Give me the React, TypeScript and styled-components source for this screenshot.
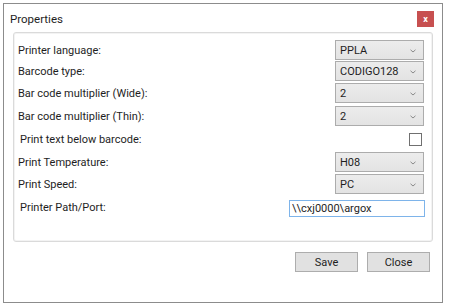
import React from "react"
import styled, { createGlobalStyle } from "styled-components"

const Global = createGlobalStyle`
    html, body {
        margin: 0;
        padding: 0;
        background: #ffffff;
    }
    body {
        font-family: Roboto, Lato, sans-serif;
        font-size: 11px;
        color: #1e1e1e;
    }
`

const Page = styled.div`
    padding: 3px 0 0 3px;
`

const Window = styled.div`
    width: 438px;
    height: 298px;
    border: 1px solid #8c8c8c;
    background: #fff;
    display: flex;
    flex-direction: column;
    box-sizing: content-box;
`

const TitleBar = styled.div`
    height: 28px;
    display: flex;
    align-items: center;
    justify-content: space-between;
    padding: 0 8px 0 6px;
`

const Title = styled.span`
    font-size: 11.5px;
    margin-top: 1px;
`

const CloseX = styled.div`
    width: 17px;
    height: 16px;
    background: #c75050;
    color: #fff;
    font-size: 9px;
    font-weight: bold;
    display: flex;
    align-items: center;
    justify-content: center;
    margin-top: 2px;
`

const Panel = styled.div`
    margin: 0 9px 0 9px;
    height: 210px;
    border: 1px solid #dadada;
    border-radius: 3px;
    box-shadow: inset 0 0 0 1px #f3f3f3;
    padding: 7px 8px 0 4px;
    box-sizing: border-box;
`

const Row = styled.div<{ $h: number; $indent?: boolean }>`
    height: ${p => p.$h}px;
    display: flex;
    justify-content: space-between;
    align-items: flex-start;
    padding-left: ${p => (p.$indent ? 2 : 0)}px;
`

const Label = styled.span<{ $top?: number }>`
    margin-top: ${p => p.$top ?? 3}px;
    line-height: 15px;
`

const Select = styled.div`
    width: 89px;
    height: 20px;
    box-sizing: border-box;
    border: 1px solid #acacac;
    background: linear-gradient(#ececec, #e3e3e3);
    display: flex;
    align-items: center;
    justify-content: space-between;
    padding: 1px 7px 0 4px;
`

const Check = styled.div`
    width: 13px;
    height: 13px;
    box-sizing: border-box;
    border: 1px solid #707070;
    background: #fff;
    margin: 5px 2px 0 0;
`

const TextBox = styled.input`
    width: 136px;
    height: 17px;
    box-sizing: border-box;
    border: 1px solid #7eb4ea;
    font-family: inherit;
    font-size: 11px;
    color: #1e1e1e;
    padding: 0 2px;
    margin: 2px -1px 0 0;
    outline: none;
`

const Footer = styled.div`
    display: flex;
    justify-content: flex-end;
    gap: 9px;
    padding: 10px 12px 0 0;
`

const Button = styled.div`
    width: 63px;
    height: 20px;
    box-sizing: border-box;
    border: 1px solid #adadad;
    background: #e1e1e1;
    display: flex;
    align-items: center;
    justify-content: center;
`

const Chevron = () => (
    <svg width="6" height="4" viewBox="0 0 6 4">
        <path d="M0.5 0.8 L3 3 L5.5 0.8" fill="none" stroke="#8a8a8a" strokeWidth="1" />
    </svg>
)

const Dropdown = ({ value }: { value: string }) => (
    <Select>
        <span>{value}</span>
        <Chevron />
    </Select>
)

export default function App() {
    return (
        <Page>
            <Global />
            <Window>
                <TitleBar>
                    <Title>Properties</Title>
                    <CloseX>x</CloseX>
                </TitleBar>
                <Panel>
                    <Row $h={21}>
                        <Label>Printer language:</Label>
                        <Dropdown value="PPLA" />
                    </Row>
                    <Row $h={22}>
                        <Label>Barcode type:</Label>
                        <Dropdown value="CODIGO128" />
                    </Row>
                    <Row $h={23}>
                        <Label>Bar code multiplier (Wide):</Label>
                        <Dropdown value="2" />
                    </Row>
                    <Row $h={22}>
                        <Label>Bar code multiplier (Thin):</Label>
                        <Dropdown value="2" />
                    </Row>
                    <Row $h={24} $indent>
                        <Label $top={4}>Print text below barcode:</Label>
                        <Check />
                    </Row>
                    <Row $h={22}>
                        <Label>Print Temperature:</Label>
                        <Dropdown value="H08" />
                    </Row>
                    <Row $h={24}>
                        <Label>Print Speed:</Label>
                        <Dropdown value="PC" />
                    </Row>
                    <Row $h={20} $indent>
                        <Label $top={2}>Printer Path/Port:</Label>
                        <TextBox defaultValue={"\\\\cxj0000\\argox"} />
                    </Row>
                </Panel>
                <Footer>
                    <Button>Save</Button>
                    <Button>Close</Button>
                </Footer>
            </Window>
        </Page>
    )
}
